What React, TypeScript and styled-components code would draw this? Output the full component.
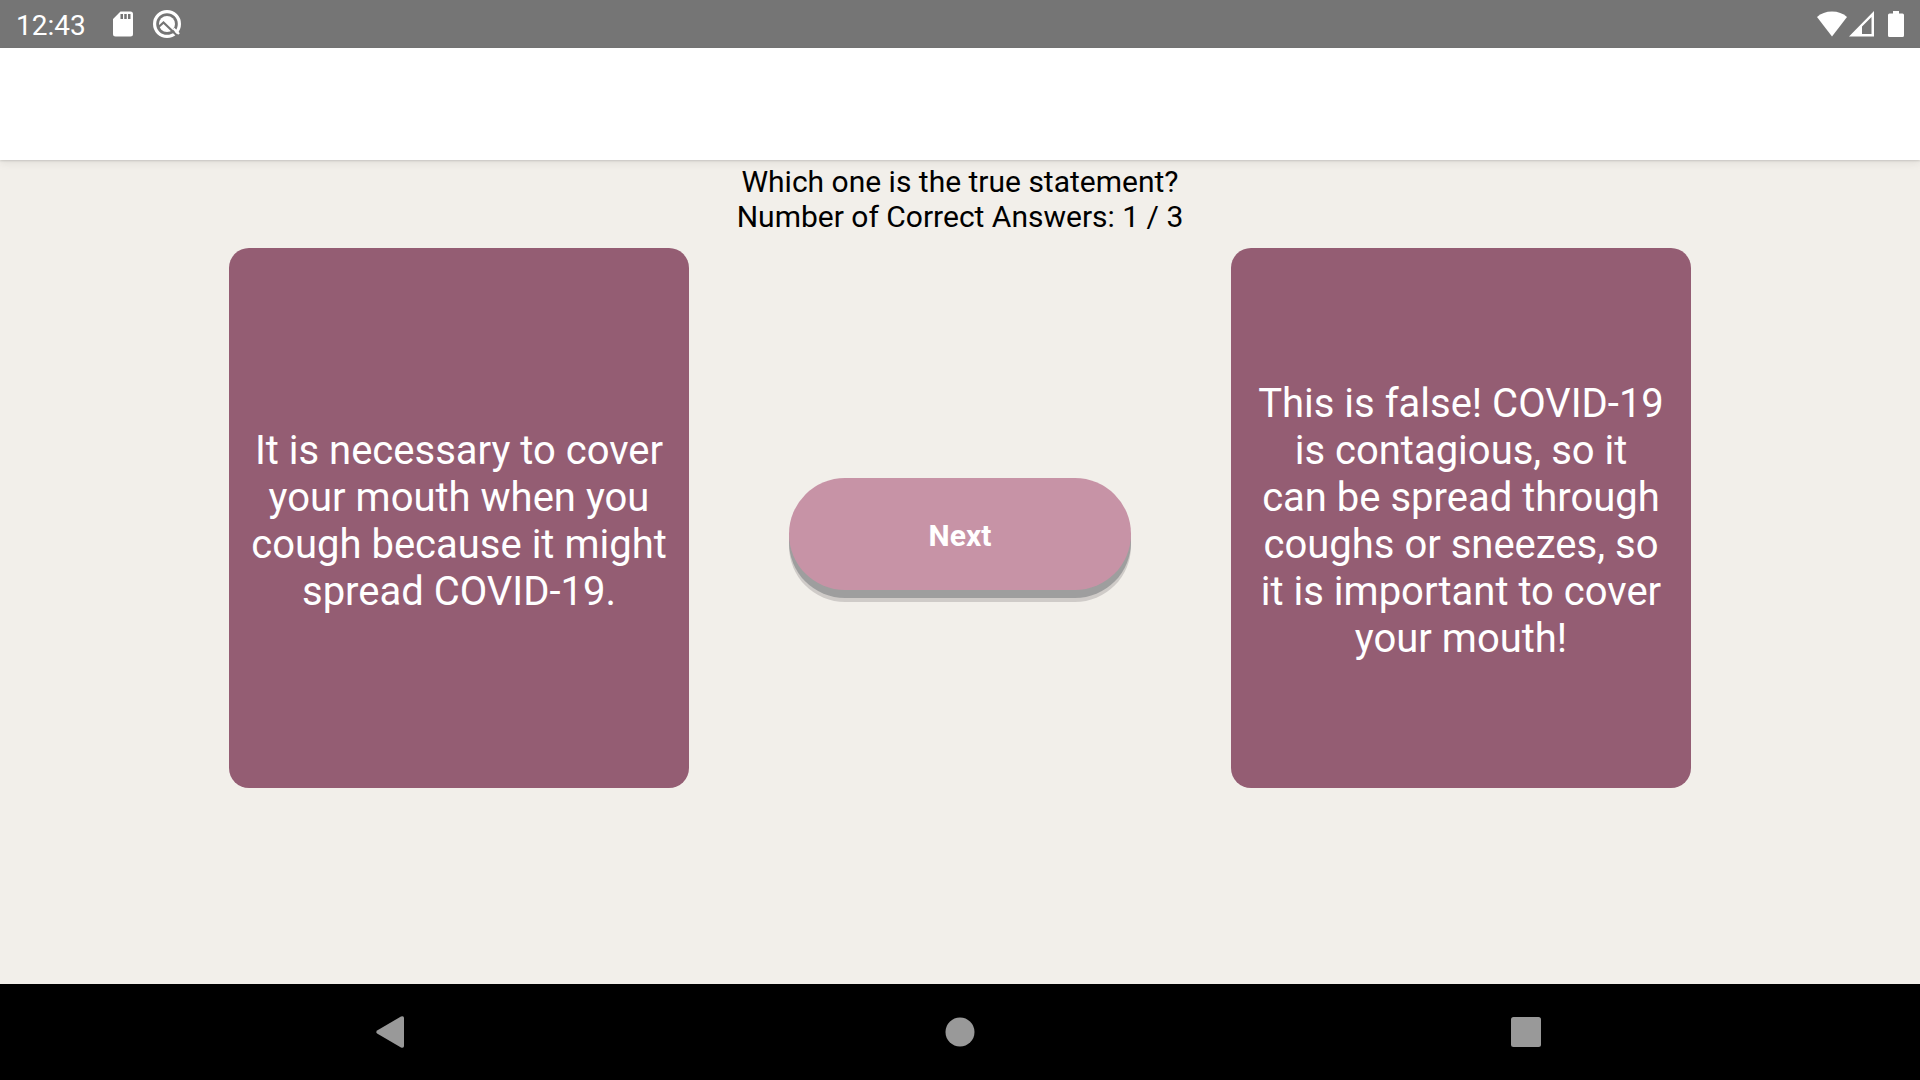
import React from "react";
import styled, { createGlobalStyle } from "styled-components";

const GlobalStyle = createGlobalStyle`
  *, *::before, *::after { box-sizing: border-box; }
  body { margin: 0; font-family: Roboto, "Liberation Sans", sans-serif; }
`;

const Screen = styled.div`
  min-height: 100vh;
  display: flex;
  flex-direction: column;
  background: #f2efea;
`;

const StatusBar = styled.div`
  height: 48px;
  padding: 0 16px;
  display: flex;
  align-items: center;
  justify-content: space-between;
  background: #757575;
  color: #fff;
`;

const StatusGroup = styled.div<{ $gap: number }>`
  display: flex;
  align-items: center;
  gap: ${({ $gap }) => $gap}px;
`;

const Clock = styled.time`
  font-size: 28px;
  line-height: 32px;
  padding-top: 4px;
  margin-right: 7px;
`;

const StatusIcon = styled.svg`
  display: block;
  flex: none;
`;

const Header = styled.header`
  height: 112px;
  background: #fff;
  box-shadow: 0 1px 2px rgba(0, 0, 0, 0.14), 0 4px 8px rgba(0, 0, 0, 0.06);
`;

const Quiz = styled.main`
  flex: 1;
  padding-top: 4px;
`;

const Question = styled.h1`
  margin: 0;
  font-size: 30px;
  font-weight: 400;
  line-height: 35px;
  text-align: center;
  color: #000;
`;

const Score = styled.p`
  margin: 0 0 14px;
  font-size: 30px;
  line-height: 35px;
  text-align: center;
  color: #000;
`;

const Answers = styled.div`
  display: flex;
  align-items: center;
  justify-content: center;
  gap: 100px;
`;

const Card = styled.button`
  width: 460px;
  height: 540px;
  padding: 6px 16px 0;
  border: 0;
  border-radius: 20px;
  background: #945d73;
  color: #fff;
  font-family: inherit;
  font-size: 40px;
  line-height: 47px;
  text-align: center;
  white-space: pre-line;
`;

const NextButton = styled.button`
  width: 342px;
  height: 112px;
  margin-top: 32px;
  padding: 2px 0 0;
  border: 0;
  border-radius: 56px;
  background: #c793a6;
  box-shadow: 0 8px 0 #9e9e9e, 0 12px 0 #cfcbc8;
  color: #fff;
  font-family: inherit;
  font-size: 30px;
  font-weight: 700;
  line-height: 35px;
`;

const NavBar = styled.nav`
  height: 96px;
  padding: 0 111px;
  display: grid;
  grid-template-columns: repeat(3, 1fr);
  align-items: center;
  justify-items: center;
  background: #000;
`;

const NavButton = styled.button`
  width: 48px;
  height: 48px;
  padding: 0;
  border: 0;
  background: transparent;
  color: #999;

  svg { display: block; }
`;

const SdCard = () => (
  <StatusIcon width="20" height="26" viewBox="0 0 20 26" aria-hidden="true">
    <path
      fill="#fff"
      fillRule="evenodd"
      d="M7.5 .5H17.5A2.5 2.5 0 0 1 20 3V23A2.5 2.5 0 0 1 17.5 25.5H2.5A2.5 2.5 0 0 1 0 23V8ZM7.500 3V8H10V3ZM11.250 3V8H13.750V3ZM15 3V8H17.500V3Z"
    />
  </StatusIcon>
);

const QBadge = () => (
  <StatusIcon width="28" height="28" viewBox="0 0 28 28" aria-hidden="true">
    <circle cx="14" cy="14" r="12.4" fill="none" stroke="#fff" strokeWidth="3.2" />
    <circle cx="14" cy="14" r="8" fill="#fff" />
    <path d="M5 17.5L10.500 12.500L24 25.500" fill="none" stroke="#757575" strokeWidth="2.200" />
    <path d="M20.500 18.500L26 24" stroke="#fff" strokeWidth="2.400" />
  </StatusIcon>
);

const Wifi = () => (
  <StatusIcon width="30" height="26" viewBox="0 0 30 26" aria-hidden="true">
    <path d="M0 6Q6 .5 15 .5T30 6L15 25.500Z" fill="#fff" />
  </StatusIcon>
);

const Signal = () => (
  <StatusIcon width="25" height="26" viewBox="0 0 25 26" aria-hidden="true">
    <path fillRule="evenodd" d="M25 0V25.500H0ZM22.500 6L13 15.500V23H22.500Z" fill="#fff" />
  </StatusIcon>
);

const Battery = () => (
  <StatusIcon width="16" height="26" viewBox="0 0 16 26" aria-hidden="true">
    <path d="M5 0H11V2.500H14.500Q16 2.500 16 4V24.500Q16 26 14.500 26H1.500Q0 26 0 24.500V4Q0 2.500 1.500 2.500H5Z" fill="#fff" />
  </StatusIcon>
);

export default function App() {
  return (
    <>
      <GlobalStyle />
      <Screen>
        <StatusBar>
          <StatusGroup $gap={20}>
            <Clock>12:43</Clock>
            <SdCard />
            <QBadge />
          </StatusGroup>
          <StatusGroup $gap={2}>
            <Wifi />
            <StatusGroup $gap={14}>
              <Signal />
              <Battery />
            </StatusGroup>
          </StatusGroup>
        </StatusBar>
        <Header />
        <Quiz>
          <Question>Which one is the true statement?</Question>
          <Score>Number of Correct Answers: 1 / 3</Score>
          <Answers>
            <Card type="button">
              {"It is necessary to cover\nyour mouth when you\ncough because it might\nspread COVID-19."}
            </Card>
            <NextButton type="button">Next</NextButton>
            <Card type="button">
              {"This is false! COVID-19\nis contagious, so it\ncan be spread through\ncoughs or sneezes, so\nit is important to cover\nyour mouth!"}
            </Card>
          </Answers>
        </Quiz>
        <NavBar aria-label="System navigation">
          <NavButton type="button" aria-label="Back">
            <svg width="48" height="48" viewBox="0 0 48 48">
              <path d="M7.500 22.200Q5 24 7.500 25.800L31 39.500Q34 40.500 34 38V10Q34 7.500 31 8.500Z" fill="currentColor" />
            </svg>
          </NavButton>
          <NavButton type="button" aria-label="Home">
            <svg width="48" height="48" viewBox="0 0 48 48">
              <circle cx="24" cy="24" r="14.500" fill="currentColor" />
            </svg>
          </NavButton>
          <NavButton type="button" aria-label="Recent apps">
            <svg width="48" height="48" viewBox="0 0 48 48">
              <rect x="9" y="9" width="30" height="30" rx="2.500" fill="currentColor" />
            </svg>
          </NavButton>
        </NavBar>
      </Screen>
    </>
  );
}
